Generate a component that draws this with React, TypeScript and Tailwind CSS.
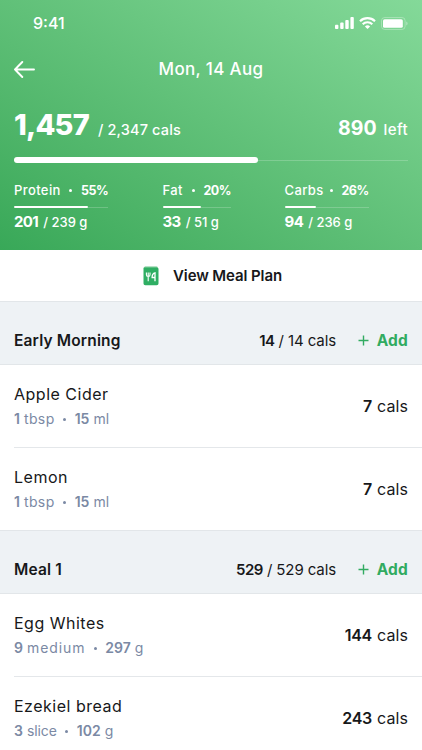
import clsx from "clsx"

type Macro = {
  name: string
  percent: string
  eaten: string
  goal: string
  column: string
  track: string
  fill: string
}

type Food = {
  name: string
  amount: string
  unit: string
  spacing: string
  weight: string
  weightUnit: string
  cals: string
}

type Meal = {
  title: string
  eaten: string
  goal: string
  foods: Food[]
}

const macros: Macro[] = [
  { name: "Protein", percent: "55%", eaten: "201", goal: "/ 239 g", column: "w-[148.5px]", track: "w-[94px]", fill: "w-[74px]" },
  { name: "Fat", percent: "20%", eaten: "33", goal: "/ 51 g", column: "w-[122px]", track: "w-[68px]", fill: "w-[38.5px]" },
  { name: "Carbs", percent: "26%", eaten: "94", goal: "/ 236 g", column: "w-[84px]", track: "w-[84px]", fill: "w-[31px]" },
]

const meals: Meal[] = [
  {
    title: "Early Morning",
    eaten: "14",
    goal: "/ 14 cals",
    foods: [
      { name: "Apple Cider", amount: "1", unit: "tbsp", spacing: "tracking-[0.4px]", weight: "15", weightUnit: "ml", cals: "7" },
      { name: "Lemon", amount: "1", unit: "tbsp", spacing: "tracking-[0.4px]", weight: "15", weightUnit: "ml", cals: "7" },
    ],
  },
  {
    title: "Meal 1",
    eaten: "529",
    goal: "/ 529 cals",
    foods: [
      { name: "Egg Whites", amount: "9", unit: "medium", spacing: "tracking-[0.9px]", weight: "297", weightUnit: "g", cals: "144" },
      { name: "Ezekiel bread", amount: "3", unit: "slice", spacing: "tracking-[-0.1px]", weight: "102", weightUnit: "g", cals: "243" },
    ],
  },
]

function StatusBar() {
  return (
    <div className="flex h-[46px] items-center justify-between pl-[33px] pr-[14px]">
      <span className="text-base leading-5 font-medium">9:41</span>
      <div className="flex items-center gap-[5px]">
        <svg width="19" height="12" viewBox="0 0 19 12" fill="currentColor">
          <rect x="0" y="7.8" width="3.4" height="4.2" rx="0.9" />
          <rect x="5.2" y="5.6" width="3.4" height="6.4" rx="0.9" />
          <rect x="10.3" y="3" width="3.4" height="9" rx="0.9" />
          <rect x="15.4" y="0" width="3.4" height="12" rx="0.9" />
        </svg>
        <svg width="17" height="12" viewBox="0 0 17 12" fill="none" stroke="currentColor" strokeWidth="2.1">
          <path d="M1 4.2a10.8 10.8 0 0 1 15 0" />
          <path d="M3.7 7.2a6.8 6.8 0 0 1 9.6 0" />
          <path d="M8.5 12 5.9 9.4a3.8 3.8 0 0 1 5.2 0z" fill="currentColor" stroke="none" />
        </svg>
        <svg width="27" height="13" viewBox="0 0 27 13" fill="none">
          <rect x="0.5" y="0.5" width="23.6" height="12" rx="3.2" stroke="white" strokeOpacity="0.3" />
          <rect x="2" y="2.2" width="19.8" height="8.6" rx="1.6" fill="white" />
          <path d="M25.2 4.6v4a2.1 2.1 0 0 0 0-4z" fill="white" fillOpacity="0.35" />
        </svg>
      </div>
    </div>
  )
}

function MacroColumn({ macro }: { macro: Macro }) {
  return (
    <div className={clsx("shrink-0", macro.column)}>
      <div className={clsx("flex items-baseline text-[13px] leading-5 whitespace-nowrap", macro.track)}>
        <span className="font-medium tracking-[0.4px]">{macro.name}</span>
        <span className="mr-[9px] ml-auto size-[3px] self-center rounded-full bg-white" />
        <span className="w-[27px] text-[12.5px] font-bold tracking-[-0.5px]">{macro.percent}</span>
      </div>
      <div className={clsx("mt-[5px] flex h-[2px] items-center", macro.track)}>
        <div className={clsx("h-[2px] rounded-full bg-white", macro.fill)} />
        <div className="h-px flex-1 bg-white/20" />
      </div>
      <div className="mt-[4px] flex items-baseline gap-[5px] leading-5 whitespace-nowrap">
        <span className="text-[15px] font-bold tracking-[-0.6px]">{macro.eaten}</span>
        <span className="text-[13px] font-medium">{macro.goal}</span>
      </div>
    </div>
  )
}

function Summary() {
  return (
    <header className="h-[250px] bg-linear-to-tr from-[#38a858] to-[#84d999] text-white">
      <StatusBar />
      <div className="relative flex h-[46px] items-center justify-center">
        <svg className="absolute left-[14px]" width="21" height="17" viewBox="0 0 21 17" fill="none" stroke="currentColor" strokeWidth="1.9" strokeLinecap="round" strokeLinejoin="round">
          <path d="M20 8.5H1M8.3 1 1 8.5 8.3 16" />
        </svg>
        <h1 className="text-[17px] leading-5 font-medium tracking-[0.35px]">Mon, 14 Aug</h1>
      </div>
      <div className="flex h-[62px] items-baseline justify-between px-[14px] pt-[13px] leading-10">
        <div className="flex items-baseline gap-[9px]">
          <span className="text-[29px] font-extrabold tracking-[-0.8px]">1,457</span>
          <span className="text-[14.5px] font-medium tracking-[0.15px]">/ 2,347 cals</span>
        </div>
        <div className="flex items-baseline gap-[7px]">
          <span className="text-[19.5px] font-bold">890</span>
          <span className="text-[15px] font-medium tracking-[0.4px]">left</span>
        </div>
      </div>
      <div className="mx-[14px] mt-[3px] flex h-[6px] items-center">
        <div className="h-[6px] w-[244px] rounded-full bg-white" />
        <div className="h-px flex-1 bg-white/20" />
      </div>
      <div className="flex px-[14px] pt-[17px]">
        {macros.map((macro) => (
          <MacroColumn macro={macro} key={macro.name} />
        ))}
      </div>
    </header>
  )
}

function PlanLink() {
  return (
    <button className="flex h-[51px] w-full items-center pl-[143px]">
      <svg width="16" height="20" viewBox="0 0 16 20" fill="none">
        <path d="M2.2 0.6h11.2a1.4 1.4 0 0 1 1.4 1.4H0.9a1.4 1.4 0 0 1 1.3-1.4z" fill="#6cc58c" />
        <path d="M0.5 1.8h13.7a1.3 1.3 0 0 1 1.3 1.3v14.3a1.8 1.8 0 0 1-1.8 1.8H2.3a1.8 1.8 0 0 1-1.8-1.8z" fill="#2fae63" />
        <path d="M3.4 6.6v2.1a1.8 1.8 0 0 0 3.6 0V6.6M5.2 6.6v8.6" stroke="white" strokeWidth="1.1" />
        <path d="M12 15.2V6.9c-1.9.4-2.9 2-2.9 4.6H12" stroke="white" strokeWidth="1.3" />
      </svg>
      <span className="ml-[14px] text-[15px] leading-5 font-semibold tracking-[-0.1px] whitespace-nowrap">View Meal Plan</span>
    </button>
  )
}

function FoodRow({ food, last }: { food: Food; last: boolean }) {
  return (
    <li className={clsx("ml-[14px] flex justify-between pr-[14px]", last ? "h-[82px]" : "h-[83px] border-b border-[#e4e7ea]")}>
      <div className="pt-[19px]">
        <p className="text-base leading-5 tracking-[0.5px]">{food.name}</p>
        <p className="mt-[5px] flex items-baseline text-sm leading-5 text-[#7b89a4]">
          <span className="font-semibold">{food.amount}</span>
          <span className={clsx("ml-[4px]", food.spacing)}>{food.unit}</span>
          <span className="mx-[8.5px] size-[3px] self-center rounded-full bg-[#7b89a4]" />
          <span className="font-semibold">{food.weight}</span>
          <span className="ml-[4px]">{food.weightUnit}</span>
        </p>
      </div>
      <p className="flex items-baseline gap-[5px] pt-[31px] text-base leading-5">
        <span className="font-semibold tracking-[-0.3px]">{food.cals}</span>
        <span className="tracking-[0.1px]">cals</span>
      </p>
    </li>
  )
}

function MealSection({ meal }: { meal: Meal }) {
  return (
    <section>
      <div className="flex h-16 items-center border-y border-[#e2e6e9] bg-[#eef2f5] px-[14px] pt-[15px] leading-5">
        <h2 className="flex-1 text-[15.5px] font-semibold tracking-[0.15px]">{meal.title}</h2>
        <span className="text-[15px] font-semibold tracking-[-0.5px]">{meal.eaten}</span>
        <span className="ml-[4px] text-[15px] tracking-[-0.1px]">{meal.goal}</span>
        <button className="ml-[22px] flex w-[50px] items-center justify-between text-[15.5px] leading-5 font-bold tracking-[0.2px] text-[#31ab61]">
          <svg width="11" height="11" viewBox="0 0 11 11" stroke="currentColor" strokeWidth="1.4">
            <path d="M5.5 0.5v10M0.5 5.5h10" />
          </svg>
          Add
        </button>
      </div>
      <ul>
        {meal.foods.map((food, i) => (
          <FoodRow food={food} last={i === meal.foods.length - 1} key={food.name} />
        ))}
      </ul>
    </section>
  )
}

export default function App() {
  return (
    <main className="h-[750px] w-[422px] overflow-hidden bg-white font-['Inter',sans-serif] text-[#17181a]">
      <Summary />
      <PlanLink />
      {meals.map((meal) => (
        <MealSection meal={meal} key={meal.title} />
      ))}
    </main>
  )
}
